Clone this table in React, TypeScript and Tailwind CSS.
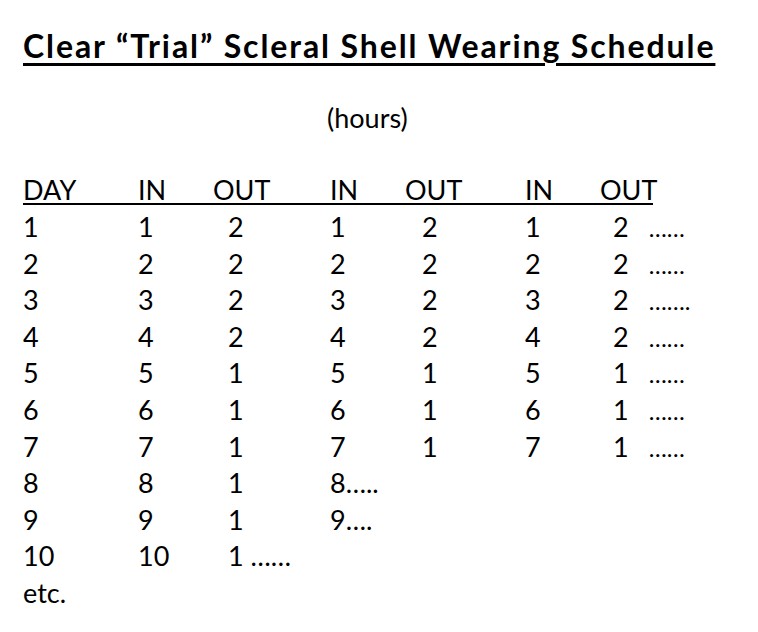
const COLS = 'grid grid-cols-[115px_75px_117px_75px_120px_75px_1fr]';

type Row = { day: string; cells: string[]; tail?: string };

// OUT columns sit a little right of their header
const outPad = ['', '', 'pl-[15px]', '', 'pl-[17px]', '', 'pl-[13px]'];

const rows: Row[] = [
  { day: '1', cells: ['1', '2', '1', '2', '1', '2'], tail: '……' },
  { day: '2', cells: ['2', '2', '2', '2', '2', '2'], tail: '……' },
  { day: '3', cells: ['3', '2', '3', '2', '3', '2'], tail: '…….' },
  { day: '4', cells: ['4', '2', '4', '2', '4', '2'], tail: '……' },
  { day: '5', cells: ['5', '1', '5', '1', '5', '1'], tail: '……' },
  { day: '6', cells: ['6', '1', '6', '1', '6', '1'], tail: '……' },
  { day: '7', cells: ['7', '1', '7', '1', '7', '1'], tail: '……' },
  { day: '8', cells: ['8', '1', '8…..'] },
  { day: '9', cells: ['9', '1', '9….'] },
  { day: '10', cells: ['10', '1 ……'] },
];

function App() {
  return (
    <div className="min-h-[632px] w-[758px] bg-white text-black font-['Lato','Liberation_Sans',sans-serif] pl-[23px]">
      <h1 className="pt-[26px] text-[32px] leading-[40px] font-bold tracking-[1.9px] underline decoration-[3px] underline-offset-[5px]">
        Clear “Trial” Scleral Shell Wearing Schedule
      </h1>

      <p className="mt-[34px] pl-[304px] text-[27px] leading-[36px]">(hours)</p>

      <div className="mt-[41px] text-[27px]">
        <div className={`${COLS} w-[630px] leading-[26px] border-b-2 border-black`}>
          <span>DAY</span>
          <span>IN</span>
          <span>OUT</span>
          <span>IN</span>
          <span>OUT</span>
          <span>IN</span>
          <span>OUT</span>
        </div>

        <div className="mt-[4px] leading-[36.6px]">
          {rows.map((r) => (
            <div key={r.day} className={`${COLS} h-[36.6px]`}>
              <span>{r.day}</span>
              {r.cells.map((c, i) => (
                <span key={i} className={outPad[i + 1] + ' whitespace-pre'}>
                  {c}
                  {i === 5 && r.tail && <span className="ml-[20px] text-[24px] leading-none">{r.tail}</span>}
                </span>
              ))}
            </div>
          ))}
          <div>etc.</div>
        </div>
      </div>
    </div>
  );
}

export default App;
